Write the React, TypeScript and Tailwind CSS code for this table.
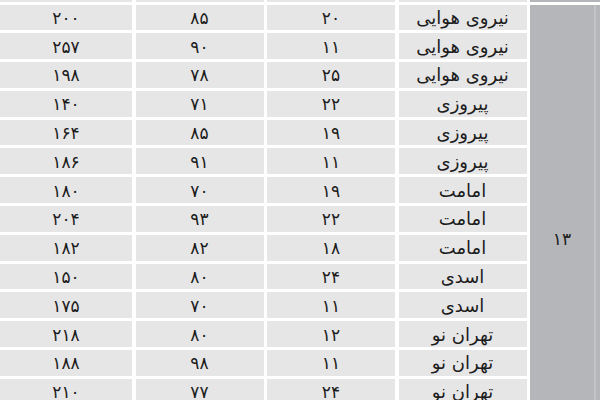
const rows: [string, string, string, string][] = [
  ["نیروی هوایی", "۲۰", "۸۵", "۲۰۰"],
  ["نیروی هوایی", "۱۱", "۹۰", "۲۵۷"],
  ["نیروی هوایی", "۲۵", "۷۸", "۱۹۸"],
  ["پیروزی", "۲۲", "۷۱", "۱۴۰"],
  ["پیروزی", "۱۹", "۸۵", "۱۶۴"],
  ["پیروزی", "۱۱", "۹۱", "۱۸۶"],
  ["امامت", "۱۹", "۷۰", "۱۸۰"],
  ["امامت", "۲۲", "۹۳", "۲۰۴"],
  ["امامت", "۱۸", "۸۲", "۱۸۲"],
  ["اسدی", "۲۴", "۸۰", "۱۵۰"],
  ["اسدی", "۱۱", "۷۰", "۱۷۵"],
  ["تهران نو", "۱۲", "۸۰", "۲۱۸"],
  ["تهران نو", "۱۱", "۹۸", "۱۸۸"],
  ["تهران نو", "۲۴", "۷۷", "۲۱۰"],
];

const cell = "flex items-center justify-center bg-[#e6e6e7] h-[25.8px] leading-none";

export default function App() {
  return (
    <div
      className="w-[600px] h-[400px] overflow-hidden bg-white text-[16px] text-[#1c1c1c]"
      style={{ fontFamily: '"DejaVu Sans", sans-serif' }}
    >
      {/* sliver of previous group */}
      <div className="flex h-[1.5px]">
        <div className="grid grid-cols-[132px_128px_128px_128px] gap-x-[3.5px] w-[530px]">
          <div className="bg-[#e6e6e7]" />
          <div className="bg-[#e6e6e7]" />
          <div className="bg-[#e6e6e7]" />
          <div className="bg-[#e6e6e7]" />
        </div>
        <div className="flex-1 bg-[#b5b6b9]" />
      </div>

      <div className="flex mt-[3px]">
        <div className="flex flex-col gap-y-[3px] w-[530px]">
          {rows.map((r, i) => (
            <div key={i} className="grid grid-cols-[132px_128px_128px_128px] gap-x-[3.5px]">
              <div className={`${cell} text-[17px] pt-[2px]`}>{r[3]}</div>
              <div className={`${cell} text-[17px] pt-[2px]`}>{r[2]}</div>
              <div className={`${cell} text-[17px] pt-[2px]`}>{r[1]}</div>
              <div className={`${cell} text-[18px] pt-[1px]`} dir="rtl">{r[0]}</div>
            </div>
          ))}
        </div>
        <div className="flex-1 flex h-[464px] bg-[#b5b6b9]">
          <div className="flex-1 flex items-center justify-center pt-[6px] text-[17px]">۱۳</div>
          <div className="w-[2px] bg-[#c3c4c7]" />
          <div className="w-[4px]" />
        </div>
      </div>
    </div>
  );
}
